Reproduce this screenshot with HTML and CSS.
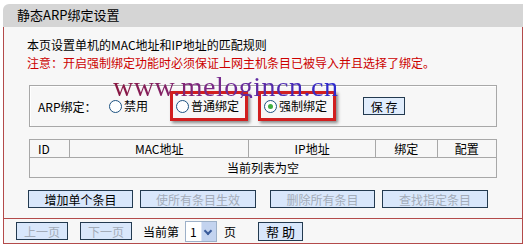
FILE: index.html
```html
<!DOCTYPE html>
<html lang="zh-CN">
<head>
  <meta charset="UTF-8" />
  <title>静态ARP绑定设置</title>
  <link rel="stylesheet" href="styles.css">
</head>
<body>

<div class="panel">
  <div class="panel-head">静态ARP绑定设置</div>
  <div class="panel-body">
    <div class="content">
      <p class="line">本页设置单机的MAC地址和IP地址的匹配规则</p>
      <p class="line warn">注意：开启强制绑定功能时必须保证上网主机条目已被导入并且选择了绑定。</p>

      <div class="arp-box">
        <span class="arp-label">ARP绑定：</span>
        <label class="opt"><span class="radio"></span>禁用</label>
        <label class="opt mark"><span class="radio"></span>普通绑定</label>
        <label class="opt mark"><span class="radio on"></span>强制绑定</label>
        <button class="btn save">保 存</button>
      </div>

      <table class="list">
        <tr>
          <th class="c-id">ID</th>
          <th class="c-mac">MAC地址</th>
          <th class="c-ip">IP地址</th>
          <th class="c-bind">绑定</th>
          <th class="c-cfg">配置</th>
        </tr>
        <tr>
          <td colspan="5" class="empty">当前列表为空</td>
        </tr>
      </table>

      <div class="actions">
        <button class="btn wide">增加单个条目</button>
        <button class="btn wide w2 off">使所有条目生效</button>
        <button class="btn wide w3 off">删除所有条目</button>
        <button class="btn wide w4 off">查找指定条目</button>
      </div>
    </div>

    <div class="pager">
      <button class="btn page off">上一页</button>
      <button class="btn page off">下一页</button>
      <span class="cur">当前第</span>
      <span class="select"><span class="num">1</span><span class="arrow"></span></span>
      <span class="unit">页</span>
      <button class="btn help">帮 助</button>
    </div>
  </div>

  <div class="watermark">www.melogincn.cn</div>
</div>

</body>
</html>
```

FILE: styles.css
```css
html, body {
  margin: 0;
  padding: 0;
  background: #fff;
  font-family: "Noto Sans CJK SC", "Liberation Sans", sans-serif;
  font-size: 12px;
  color: #000;
}
.panel {
  position: relative;
  width: 520px;
  margin: 4px 0 0 3px;
}
.panel-head {
  height: 23px;
  line-height: 22px;
  background: #d5d5d5;
  border-top-left-radius: 6px;
  padding-left: 14px;
  font-size: 13px;
}
.panel-body {
  background: #f7f7f7;
  border: 1px solid #b34a4a;
  border-top: none;
}
.content {
  padding: 9px 0 10px 23px;
  border-bottom: 1px solid #b34a4a;
}
.line {
  margin: 0;
  line-height: 18px;
}
.warn {
  color: #cc0000;
}
.arp-box {
  display: flex;
  align-items: center;
  width: 466px;
  height: 40px;
  margin: 13px 0 0 2px;
  border: 1px solid #a8a8a8;
  box-shadow: 1px 1px 0 #fff inset;
}
.arp-label {
  margin-left: 8px;
  width: 71px;
}
.opt {
  display: flex;
  align-items: center;
  line-height: 18px;
}
.radio {
  width: 11px;
  height: 11px;
  border: 1px solid #1d5281;
  border-radius: 50%;
  background: #fff;
  margin-right: 2px;
  position: relative;
}
.radio.on::after {
  content: "";
  position: absolute;
  left: 3px;
  top: 3px;
  width: 5px;
  height: 5px;
  border-radius: 50%;
  background: #3fae3f;
}
.mark {
  height: 24px;
  border: 3px solid #d11f1f;
  box-shadow: 2px 2px 3px rgba(0, 0, 0, 0.45);
  padding: 0 6px 0 3px;
}
.opt:nth-of-type(2) {
  margin-left: 22px;
}
.opt:nth-of-type(3) {
  margin-left: 10px;
}
.btn {
  font-family: "Noto Sans CJK SC", "Liberation Sans", sans-serif;
  font-size: 12px;
  background: #d9e7fb;
  border: 1px solid #233a50;
  color: #000;
  padding: 0;
  line-height: 15px;
  border-radius: 0;
}
.save {
  margin-left: 27px;
  width: 42px;
  height: 18px;
  background: #e1edfc;
}
.list {
  width: 468px;
  margin: 12px 0 0 2px;
  border-collapse: collapse;
}
.list th, .list td {
  border: 1px solid #a8a8a8;
  font-weight: normal;
  height: 17px;
  padding: 0;
  line-height: 17px;
}
.c-id { width: 32px; text-align: left; padding-left: 8px !important; }
.c-mac { width: 183px; }
.c-ip { width: 130px; }
.c-bind { width: 62px; }
.c-cfg { width: 60px; }
.empty {
  text-align: center;
  height: 19px !important;
}
.actions {
  display: flex;
  margin-top: 12px;
  margin-left: 1px;
}
.wide {
  width: 105px;
  height: 18px;
}
.w2 { width: 116px; margin-left: 7px; }
.w3 { margin-left: 14px; }
.w4 { width: 106px; margin-left: 7px; }
.off {
  color: #a3acb9;
}
.pager {
  display: flex;
  align-items: center;
  height: 24px;
  padding-left: 12px;
}
.page {
  width: 52px;
  height: 18px;
  margin-right: 12px;
}
.cur {
  margin-left: -1px;
}
.select {
  display: flex;
  align-items: stretch;
  width: 30px;
  height: 19px;
  margin-left: 6px;
  border: 1px solid #9db0c8;
  background: #fff;
}
.num {
  flex: 1;
  padding-left: 4px;
  line-height: 19px;
}
.arrow {
  width: 14px;
  background: #c3d3ef;
  border-left: 1px solid #dde6f5;
  position: relative;
}
.arrow::after {
  content: "";
  position: absolute;
  left: 3px;
  top: 6px;
  width: 4px;
  height: 4px;
  border-right: 2px solid #3a5b9a;
  border-bottom: 2px solid #3a5b9a;
  transform: rotate(45deg);
}
.unit {
  margin-left: 7px;
}
.help {
  width: 45px;
  height: 19px;
  margin-left: 22px;
  font-size: 13px;
}
.watermark {
  position: absolute;
  left: 110px;
  top: 72px;
  font-family: "Liberation Serif", serif;
  font-size: 28px;
  line-height: 22px;
  letter-spacing: 0.5px;
  background: linear-gradient(to right, #8a1740, #7a2a8a 45%, #2a2ad0);
  -webkit-background-clip: text;
  background-clip: text;
  color: transparent;
  pointer-events: none;
}
```
